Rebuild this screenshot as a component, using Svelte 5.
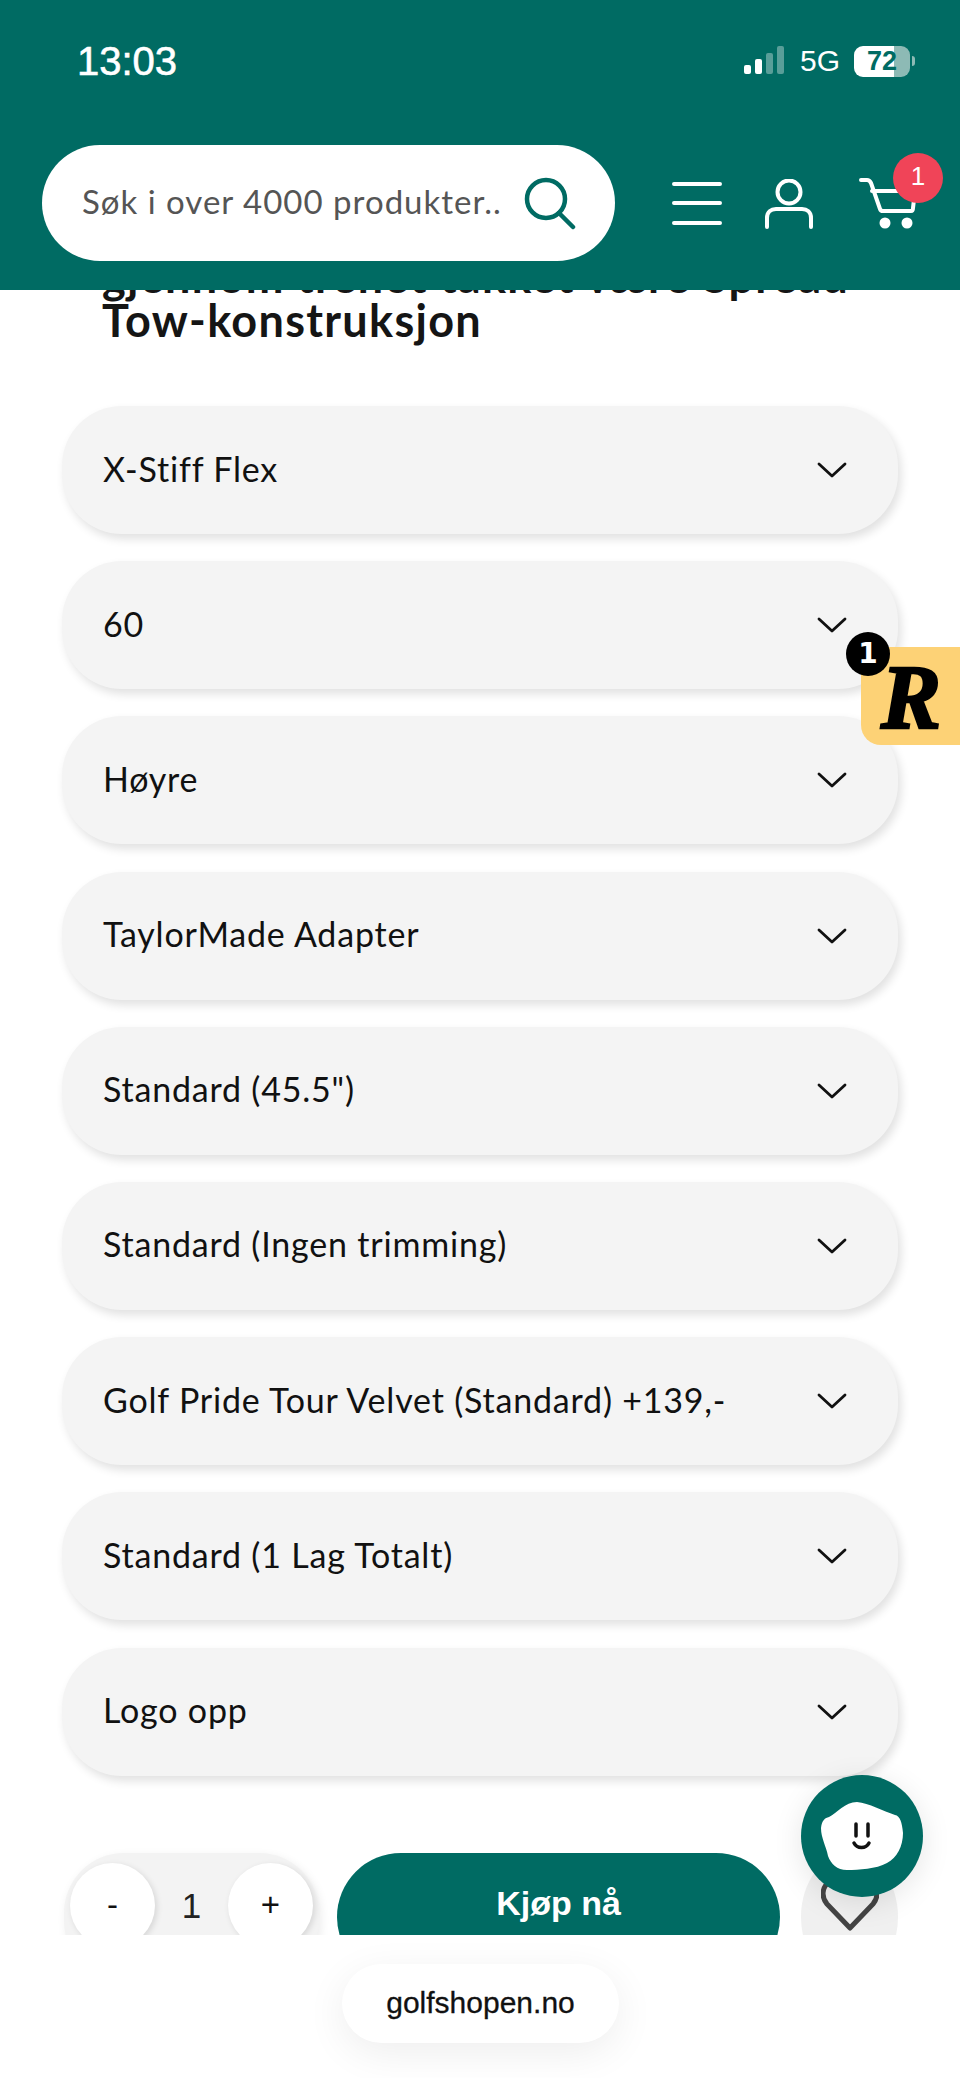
<script>
  const options = [
    "X-Stiff Flex",
    "60",
    "Høyre",
    "TaylorMade Adapter",
    'Standard (45.5")',
    "Standard (Ingen trimming)",
    "Golf Pride Tour Velvet (Standard) +139,-",
    "Standard (1 Lag Totalt)",
    "Logo opp",
  ];
</script>

<div class="page">
  <header class="header">
    <div class="status">
      <span class="time">13:03</span>
      <div class="status-right">
        <svg class="signal" width="42" height="30" viewBox="0 0 42 30">
          <rect x="0" y="19" width="7" height="9" rx="2" fill="#fff" />
          <rect x="11" y="13" width="7" height="15" rx="2" fill="#fff" />
          <rect x="22" y="7" width="7" height="21" rx="2" fill="#fff" opacity="0.35" />
          <rect x="33" y="0" width="7" height="28" rx="2" fill="#fff" opacity="0.35" />
        </svg>
        <span class="net">5G</span>
        <div class="battery"><span>72</span></div>
        <div class="nub"></div>
      </div>
    </div>
    <div class="nav">
      <div class="search">
        <span class="placeholder">Søk i over 4000 produkter..</span>
        <svg width="54" height="54" viewBox="0 0 54 54" fill="none" stroke="#006b63" stroke-width="4.5" stroke-linecap="round">
          <circle cx="23" cy="23" r="19" />
          <path d="M36 37 L50 51" />
        </svg>
      </div>
      <div class="icons">
        <svg width="50" height="48" viewBox="0 0 50 48" stroke="#fff" stroke-width="4" stroke-linecap="round">
          <path d="M2 4H48M2 23H48M2 43H48" />
        </svg>
        <svg width="50" height="50" viewBox="0 0 50 50" fill="none" stroke="#fff" stroke-width="4" stroke-linecap="round">
          <circle cx="25" cy="13" r="11.5" />
          <path d="M3 48V39C3 33 7 30 12 30H38C43 30 47 33 47 39V48" />
        </svg>
        <div class="cart">
          <svg width="58" height="52" viewBox="0 0 58 52" fill="none" stroke="#fff" stroke-width="4" stroke-linecap="round" stroke-linejoin="round">
            <path d="M2 3H8C10 3 11 4 12 6L21 32C21.500 33.500 22.500 34 24 34H52C53.500 34 54 33 54 31L56 14H13" />
            <circle cx="26" cy="46" r="5.500" fill="#fff" stroke="none" />
            <circle cx="48" cy="46" r="5.500" fill="#fff" stroke="none" />
          </svg>
          <span class="cart-count">1</span>
        </div>
      </div>
    </div>
  </header>

  <main class="content">
    <h1 class="title">gjennom trenet takket være Spread<br />Tow-konstruksjon</h1>
    <div class="options">
      {#each options as option}
        <div class="option">
          <span class="option-label">{option}</span>
          <svg width="30" height="18" viewBox="0 0 30 18" fill="none" stroke="#111" stroke-width="2.800" stroke-linecap="round" stroke-linejoin="round">
            <path d="M2 3L15 15L28 3" />
          </svg>
        </div>
      {/each}
    </div>
    <div class="buy-row">
      <div class="qty">
        <div class="qty-btn minus">-</div>
        <span class="qty-value">1</span>
        <div class="qty-btn">+</div>
      </div>
      <div class="buy">Kjøp nå</div>
      <div class="wish">
        <svg width="58" height="56" viewBox="0 0 58 56" fill="none" stroke="#444" stroke-width="5" stroke-linejoin="round">
          <path d="M29 52L6 28C0 21 1 11 8 6C15 1 24 3 29 10C34 3 43 1 50 6C57 11 58 21 52 28Z" />
        </svg>
      </div>
    </div>
  </main>

  <footer class="footer">
    <div class="domain">golfshopen.no</div>
  </footer>

  <div class="reward">
    <span class="reward-r">R</span>
    <span class="reward-count">1</span>
  </div>

  <div class="chat">
    <svg width="82" height="68" viewBox="0 0 82 68">
      <path d="M0 26C1 18 4 16 8 15C16 11 24 0 36 0C48 1 62 9 74 13C79 14 81 20 82 31C82 44 76 56 66 61C55 67 38 68 26 68C16 68 10 62 7 54C5 44 0 36 0 26Z" fill="#fff" />
      <path d="M35 22V34M47 22V34" stroke="#111" stroke-width="3.500" stroke-linecap="round" fill="none" />
      <path d="M33 41C36 47 45 47 48 41" stroke="#111" stroke-width="3.500" stroke-linecap="round" fill="none" />
    </svg>
  </div>
</div>

<style>
  :global(body) {
    margin: 0;
    background: #fff;
  }
  .page {
    position: relative;
    width: 960px;
    height: 2078px;
    display: flex;
    flex-direction: column;
    overflow: hidden;
    font-family: Lato, "Noto Sans", sans-serif;
    color: #111;
  }
  .header {
    height: 290px;
    flex: none;
    background: #006b63;
    display: flex;
    flex-direction: column;
    position: relative;
    z-index: 1;
  }
  .status {
    height: 145px;
    display: flex;
    justify-content: space-between;
    padding: 38px 44px 0 77px;
    box-sizing: border-box;
    color: #fff;
    font-family: "Liberation Sans", sans-serif;
  }
  .time {
    font-size: 40px;
    font-weight: 500;
    line-height: 46px;
    -webkit-text-stroke: 0.6px #fff;
  }
  .status-right {
    display: flex;
    align-items: center;
    height: 46px;
    margin-right: 1px;
  }
  .signal {
    margin-right: 14px;
  }
  .net {
    font-size: 30px;
    margin-right: 14px;
  }
  .battery {
    width: 56px;
    height: 31px;
    border-radius: 9px;
    background: linear-gradient(to right, #fff 72%, #8dbab5 72%);
    color: #006b63;
    font-size: 27px;
    font-weight: 700;
    line-height: 31px;
    text-align: center;
  }
  .nub {
    width: 3px;
    height: 10px;
    margin-left: 2px;
    border-radius: 0 3px 3px 0;
    background: #8dbab5;
  }
  .nav {
    display: flex;
    align-items: center;
    height: 116px;
    padding-left: 42px;
  }
  .search {
    width: 573px;
    height: 116px;
    border-radius: 58px;
    background: #fff;
    display: flex;
    align-items: center;
    justify-content: space-between;
    box-sizing: border-box;
    padding: 0 38px 0 40px;
  }
  .placeholder {
    font-size: 33px;
    letter-spacing: 1px;
    color: #555;
    white-space: nowrap;
    padding-bottom: 4px;
  }
  .icons {
    display: flex;
    align-items: center;
    gap: 42px;
    margin-left: 57px;
    padding-top: 2px;
  }
  .cart {
    position: relative;
    margin-left: 3px;
  }
  .cart-count {
    position: absolute;
    top: -24px;
    right: -26px;
    width: 50px;
    height: 50px;
    border-radius: 50%;
    background: #f04458;
    color: #fff;
    font-size: 26px;
    line-height: 46px;
    text-align: center;
    font-family: "Liberation Sans", sans-serif;
  }
  .content {
    height: 1645px;
    flex: none;
    overflow: hidden;
  }
  /* the page is scrolled, so the heading runs in under the header */
  .title {
    margin: -36px 60px 0 102px;
    font-size: 45px;
    line-height: 44px;
    letter-spacing: 1.300px;
    font-weight: 700;
    color: #151515;
    white-space: nowrap;
  }
  .options {
    display: flex;
    flex-direction: column;
    gap: 27.200px;
    margin: 64px 62px 0 62px;
  }
  .option {
    height: 128px;
    border-radius: 60px;
    background: #f4f4f4;
    box-shadow: 3px 5px 10px rgba(0, 0, 0, 0.12);
    display: flex;
    align-items: center;
    justify-content: space-between;
    padding: 0 51px 0 41px;
    font-size: 34px;
    letter-spacing: 0.8px;
  }
  .option-label {
    padding-bottom: 4px;
  }
  .buy-row {
    display: flex;
    align-items: flex-start;
    margin: 77px 62px 0 64px;
  }
  .qty {
    width: 255px;
    height: 128px;
    box-sizing: border-box;
    border-radius: 60px;
    background: #f3f3f3;
    display: flex;
    justify-content: space-between;
    padding: 10px 6px;
    box-shadow: 2px 3px 10px rgba(0, 0, 0, 0.08);
    flex: none;
  }
  .qty-btn {
    width: 85px;
    height: 85px;
    border-radius: 50%;
    background: #fff;
    box-shadow: 2px 2px 6px rgba(0, 0, 0, 0.12);
    display: flex;
    align-items: center;
    justify-content: center;
    font-family: "Liberation Sans", sans-serif;
    font-size: 33px;
  }
  .qty-value {
    line-height: 85px;
    font-size: 35px;
    font-family: "Liberation Sans", sans-serif;
    color: #222;
  }
  .buy {
    width: 443px;
    height: 128px;
    margin-left: 18px;
    border-radius: 64px;
    background: #006b63;
    color: #fff;
    flex: none;
    text-align: center;
    line-height: 100px;
    font-family: "Liberation Sans", sans-serif;
    font-size: 34px;
    font-weight: 700;
  }
  .wish {
    width: 97px;
    height: 128px;
    margin-left: 21px;
    border-radius: 50%;
    background: #f0f0f0;
    flex: none;
    display: flex;
    justify-content: center;
    padding-top: 23px;
    box-sizing: border-box;
  }
  .footer {
    flex: 1;
    display: flex;
    justify-content: center;
    padding-top: 29px;
  }
  .domain {
    width: 277px;
    height: 79px;
    margin-left: 1px;
    border-radius: 40px;
    background: #fff;
    box-shadow: 0 10px 40px rgba(0, 0, 0, 0.07);
    text-align: center;
    line-height: 78px;
    font-family: "Liberation Sans", sans-serif;
    font-size: 30px;
    -webkit-text-stroke: 0.3px #111;
  }
  .reward {
    position: absolute;
    left: 861px;
    top: 647px;
    width: 99px;
    height: 98px;
    background: #fdd276;
    border-radius: 20px 0 0 20px;
  }
  .reward-r {
    position: absolute;
    left: 20px;
    top: 6px;
    font-family: "Liberation Serif", serif;
    font-weight: 700;
    font-style: italic;
    font-size: 90px;
    line-height: 90px;
    color: #000;
    -webkit-text-stroke: 2.500px #000;
  }
  .reward-count {
    position: absolute;
    left: -15px;
    top: -15px;
    width: 44px;
    height: 44px;
    border-radius: 50%;
    background: #000;
    color: #fff;
    font-family: "DejaVu Sans", sans-serif;
    font-weight: 700;
    font-size: 28px;
    line-height: 44px;
    text-align: center;
  }
  .chat {
    position: absolute;
    left: 801px;
    top: 1775px;
    width: 122px;
    height: 122px;
    border-radius: 50%;
    background: #006b63;
    display: flex;
    align-items: center;
    justify-content: center;
    box-shadow: 0 6px 30px rgba(0, 0, 0, 0.1);
  }
</style>
